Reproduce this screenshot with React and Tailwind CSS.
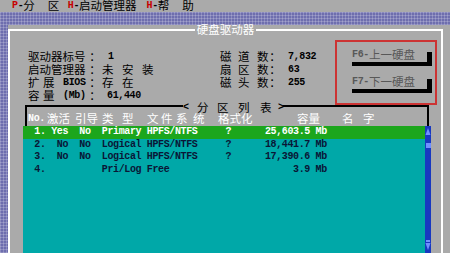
import React from "react";

const M = "font-['Liberation_Mono',monospace] font-bold text-[10px] tracking-[-0.375px]";
const C = "font-['Noto_Sans_CJK_SC',sans-serif] text-[11.5px]";

function Row({ children }) {
  return <div className="h-[13px] flex items-center">{children}</div>;
}

function Colon() {
  return <span className={`${C} w-[12px] text-center`}>：</span>;
}

function Btn({ k, label, className = "" }) {
  return (
    <div className={`w-[80px] h-[14px] bg-[#aaaaaa] shadow-[5px_4px_0_#000] flex items-center pl-[5px] text-[#585858] ${className}`}>
      <span className={M}>{k}</span>
      <span className={C}>{label}</span>
    </div>
  );
}

const rows = [
  { t: "  1. Yes  No  Primary HPFS/NTFS     ?      25,603.5 Mb", sel: true },
  { t: "  2.  No  No  Logical HPFS/NTFS     ?      18,441.7 Mb" },
  { t: "  3.  No  No  Logical HPFS/NTFS     ?      17,390.6 Mb" },
  { t: "  4.          Pri/Log Free                      3.9 Mb" },
];

export default function App() {
  return (
    <div className="w-[450px] h-[253px] overflow-hidden flex flex-col leading-none text-black bg-[#6e6eae] bg-[image:linear-gradient(90deg,rgba(255,255,255,0.2)_1px,transparent_1px),linear-gradient(rgba(255,255,255,0.2)_1px,transparent_1px)] bg-[size:3px_3px]">
      {/* menu bar */}
      <div className="h-[12px] bg-[#aaaaaa] flex items-center pl-[12px]">
        <span className={`${M} text-[#c80000]`}>P</span>
        <span className={M}>-</span>
        <span className={C}>分</span>
        <span className={`${C} ml-[13px]`}>区</span>
        <span className={`${M} text-[#c80000] ml-[8.5px]`}>H</span>
        <span className={M}>-</span>
        <span className={C}>启动管理器</span>
        <span className={`${M} text-[#c80000] ml-[10px]`}>H</span>
        <span className={M}>-</span>
        <span className={C}>帮</span>
        <span className={`${C} ml-[13px]`}>助</span>
      </div>

      {/* desktop area */}
      <div className="flex-1 pt-[13px] pl-[8px] flex flex-col">
        <div className="flex-1 bg-[#aaaaaa] pr-[7px] flex flex-col">
          <div className="flex-1 mt-[4px] border-x-2 border-white flex flex-col">
            {/* title line */}
            <div className="-mt-[4px] h-[10px] -mx-[2px] flex items-center">
              <div className="flex-1 h-[2px] bg-white" />
              <span className={`${C} text-white px-[2px]`}>硬盘驱动器</span>
              <div className="flex-1 h-[2px] bg-white" />
            </div>

            {/* info + buttons */}
            <div className="mt-[5px] flex">
              <div className="ml-[18px] mt-[10px] w-[307px] flex">
                <div className="w-[192px] flex flex-col">
                  <Row>
                    <span className={`${C} w-[61px]`}>驱动器标号</span>
                    <Colon />
                    <span className={`${M} ml-[7px]`}>1</span>
                  </Row>
                  <Row>
                    <span className={`${C} w-[61px]`}>启动管理器</span>
                    <Colon />
                    <span className={`${C} w-[20px] ml-[1px]`}>未</span>
                    <span className={`${C} w-[20px]`}>安</span>
                    <span className={`${C} w-[20px]`}>装</span>
                  </Row>
                  <Row>
                    <span className={`${C} w-[15px]`}>扩</span>
                    <span className={`${C} w-[20px]`}>展</span>
                    <span className={`${M} w-[26px]`}>BIOS</span>
                    <Colon />
                    <span className={`${C} w-[20px] ml-[1px]`}>存</span>
                    <span className={`${C} w-[20px]`}>在</span>
                  </Row>
                  <Row>
                    <span className={`${C} w-[15px]`}>容</span>
                    <span className={`${C} w-[20px]`}>量</span>
                    <span className={`${M} w-[26px]`}>(Mb)</span>
                    <Colon />
                    <span className={`${M} ml-[6px]`}>61,440</span>
                  </Row>
                </div>
                <div className="flex-1 flex flex-col">
                  <Row>
                    <span className={`${C} w-[18px]`}>磁</span>
                    <span className={`${C} w-[19px]`}>道</span>
                    <span className={`${C} w-[12px]`}>数</span>
                    <Colon />
                    <span className={`${M} ml-[7px]`}>7,832</span>
                  </Row>
                  <Row>
                    <span className={`${C} w-[18px]`}>扇</span>
                    <span className={`${C} w-[19px]`}>区</span>
                    <span className={`${C} w-[12px]`}>数</span>
                    <Colon />
                    <span className={`${M} ml-[7px]`}>63</span>
                  </Row>
                  <Row>
                    <span className={`${C} w-[18px]`}>磁</span>
                    <span className={`${C} w-[19px]`}>头</span>
                    <span className={`${C} w-[12px]`}>数</span>
                    <Colon />
                    <span className={`${M} ml-[7px]`}>255</span>
                  </Row>
                </div>
              </div>
              <div className="w-[102px] h-[65px] border-2 border-[#cc3333] flex flex-col">
                <Btn k="F6-" label="上一硬盘" className="ml-[10px] mt-[6px]" />
                <Btn k="F7-" label="下一硬盘" className="ml-[10px] mt-[13px]" />
              </div>
            </div>

            {/* partition list frame */}
            <div className="mt-[1px] ml-[15px] w-[404px] h-[20px] border-x-2 border-black flex flex-col">
              <div className="-mt-[5px] h-[10px] -mx-[2px] flex items-center">
                <div className="w-[158px] h-[2px] bg-black" />
                <div className="flex items-center translate-y-[2px]">
                  <span className={`${M} w-[14px]`}>&lt;</span>
                  <span className={`${C} w-[20px]`}>分</span>
                  <span className={`${C} w-[21px]`}>区</span>
                  <span className={`${C} w-[22px]`}>列</span>
                  <span className={`${C} w-[18px]`}>表</span>
                  <span className={`${M} w-[5px]`}>&gt;</span>
                </div>
                <div className="flex-1 h-[2px] bg-black" />
              </div>
              <div className="h-[15px] flex items-center pl-[1px] pt-[1px] text-white">
                <span className={`${M} w-[19px]`}>No.</span>
                <span className={`${C} w-[28px]`}>激活</span>
                <span className={`${C} w-[27px]`}>引导</span>
                <span className={`${C} w-[20px]`}>类</span>
                <span className={`${C} w-[25px]`}>型</span>
                <span className={`${C} w-[14px]`}>文</span>
                <span className={`${C} w-[15px]`}>件</span>
                <span className={`${C} w-[17px]`}>系</span>
                <span className={`${C} w-[25px]`}>统</span>
                <span className={`${C} w-[79px]`}>格式化</span>
                <span className={`${C} w-[45px]`}>容量</span>
                <span className={`${C} w-[21px]`}>名</span>
                <span className={C}>字</span>
              </div>
            </div>

            {/* list + scrollbar */}
            <div className="flex-1 flex ml-[13px]">
              <div className="w-[402px] bg-[#00a8a8] flex flex-col">
                {rows.map((r, i) => (
                  <div
                    key={i}
                    className={`h-[12.5px] flex items-center whitespace-pre ${M} ${r.sel ? "bg-[#1ca61c] text-white" : "text-[#0a1636]"}`}
                  >
                    {r.t}
                  </div>
                ))}
              </div>
              <div className="w-[6px] bg-[#1838c0] flex flex-col items-center">
                <svg width="6" height="9" viewBox="0 0 6 9" className="mt-[1px]">
                  <polygon points="3,1 5.5,8 0.5,8" fill="#6f8fff" />
                </svg>
                <div className="w-[5px] h-[5px] bg-[#6f8fff] mt-[7px]" />
                <div className="flex-1" />
                <div className="w-[4px] h-[2px] bg-[#6f8fff]" />
                <svg width="6" height="9" viewBox="0 0 6 9" className="mb-[2px]">
                  <polygon points="0.5,1 5.5,1 3,8" fill="#6f8fff" />
                </svg>
              </div>
            </div>
          </div>
        </div>
      </div>
    </div>
  );
}
